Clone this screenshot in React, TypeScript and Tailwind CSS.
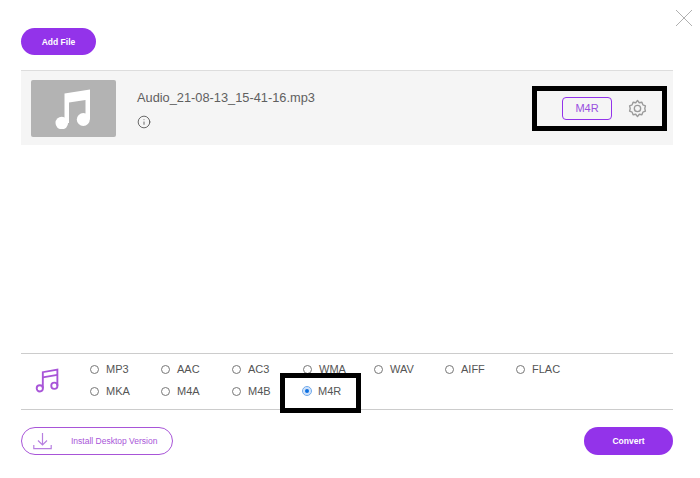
import { Info } from "lucide-react";

const formats = ["MP3", "AAC", "AC3", "WMA", "WAV", "AIFF", "FLAC", "MKA", "M4A", "M4B", "M4R"];

function MusicNote({ className }: { className: string }) {
  return (
    <svg viewBox="0 0 24 25" className={className} fill="none" stroke="currentColor">
      <path d="M7.5 20.5V5L21.5 2.5V18" strokeWidth="1.8" />
      <path d="M7.5 10L21.5 7.5" strokeWidth="1.8" />
      <circle cx="4.6" cy="20.5" r="3" strokeWidth="1.8" />
      <circle cx="18.6" cy="18" r="3" strokeWidth="1.8" />
    </svg>
  );
}

function SolidNote() {
  return (
    <svg viewBox="0 0 36 42" className="-ml-[2px] h-[42px] w-[36px]" fill="#ffffff">
      <path d="M9.5 6.5L35 2.5V32.5H30.5V13L14 15.5V36H9.5Z" />
      <circle cx="6.8" cy="36" r="6.3" />
      <circle cx="28.3" cy="32.5" r="6.5" />
    </svg>
  );
}

function Gear() {
  return (
    <svg viewBox="0 0 24 24" className="h-[19px] w-[19px] text-[#9a9a9a]" fill="none" stroke="currentColor" strokeWidth="1.7" strokeLinejoin="round">
      <path d="M12 1.8l2.2 2.9 3.4-.6 1.2 3.3 3.2 1.3-.8 3.3.8 3.3-3.2 1.3-1.2 3.3-3.4-.6L12 22.2l-2.2-2.9-3.4.6-1.2-3.3-3.2-1.3.8-3.3-.8-3.3 3.2-1.3 1.2-3.3 3.4.6z" />
      <circle cx="12" cy="12" r="4" />
    </svg>
  );
}

function TrayDownload() {
  return (
    <svg viewBox="0 0 19 17" className="h-[17px] w-[19px] text-[#b77fe0]" fill="none" stroke="currentColor" strokeWidth="1.2">
      <path d="M9.5 0V11.5M5 7.5L9.5 12L14 7.5" />
      <path d="M0.8 12V15.6H18.2V12" />
    </svg>
  );
}

export default function App() {
  return (
    <div className="relative flex h-[478px] w-[700px] flex-col overflow-hidden bg-white pl-[21px] pr-[27px] pt-[28px] font-['Liberation_Sans',Arial,sans-serif]">
      <button className="flex h-[27px] w-[75px] items-center justify-center rounded-full bg-[#9333ea] pt-[1px] text-[8.5px] font-bold text-white">
        Add File
      </button>

      <div className="mt-[15px] flex h-[75px] items-center border-t border-[#dddddd] bg-[#f5f5f5] pl-[10px] pr-[26px]">
        <div className="flex h-[57px] w-[85px] items-center justify-center rounded-[2px] bg-[#b3b3b3]">
          <SolidNote />
        </div>
        <div className="ml-[21px] mt-[4px] flex flex-col">
          <span className="text-[12.8px] leading-[14px] text-[#606060]">Audio_21-08-13_15-41-16.mp3</span>
          <Info className="mt-[10px] h-[14px] w-[14px] text-[#555555]" strokeWidth={1.5} />
        </div>
        <button className="ml-auto flex h-[23px] w-[50px] items-center justify-center rounded-[4px] border border-[#9333ea] text-[11px] text-[#9a4fe0]">
          M4R
        </button>
        <div className="ml-[16px]">
          <Gear />
        </div>
      </div>

      <div className="mt-[208px] flex h-[57px] border-y border-[#cccccc]">
        <MusicNote className="ml-[14px] mt-[13px] h-[26px] w-[25px] text-[#a855d8]" />
        <div className="ml-[30px] mt-[4px] grid h-[44px] grid-cols-[repeat(7,71px)] grid-rows-[22px_22px]">
          {formats.map((f) => (
            <label key={f} className="flex items-center gap-[7px] text-[11px] text-[#555555]">
              <span
                className={
                  f === "M4R"
                    ? "h-[8px] w-[8px] rounded-full border-2 border-[#cfe2fb] bg-[#0b6fe0] outline outline-[#6ea8ea]"
                    : "h-[9px] w-[9px] rounded-full border border-[#777777]"
                }
              />
              {f}
            </label>
          ))}
        </div>
      </div>

      <div className="mt-[17px] flex justify-between">
        <button className="flex h-[28px] w-[152px] items-center rounded-full border border-[#a855d8] pl-[11px] text-[8.5px] text-[#a855d8]">
          <TrayDownload />
          <span className="ml-[19px]">Install Desktop Version</span>
        </button>
        <button className="flex h-[28px] w-[89px] items-center justify-center rounded-full bg-[#9333ea] pt-[1px] text-[8.5px] font-bold text-white">
          Convert
        </button>
      </div>

      <svg viewBox="0 0 18 16" className="absolute left-[675px] top-[10px] h-[16px] w-[18px] text-[#b0b0b0]" fill="none" stroke="currentColor" strokeWidth="1">
        <path d="M1 0L17 16M17 0L1 16" />
      </svg>
      <div className="absolute left-[532px] top-[86px] h-[45px] w-[135px] border-[5px] border-black" />
      <div className="absolute left-[280px] top-[373px] h-[40px] w-[81px] border-[5px] border-black" />
    </div>
  );
}
